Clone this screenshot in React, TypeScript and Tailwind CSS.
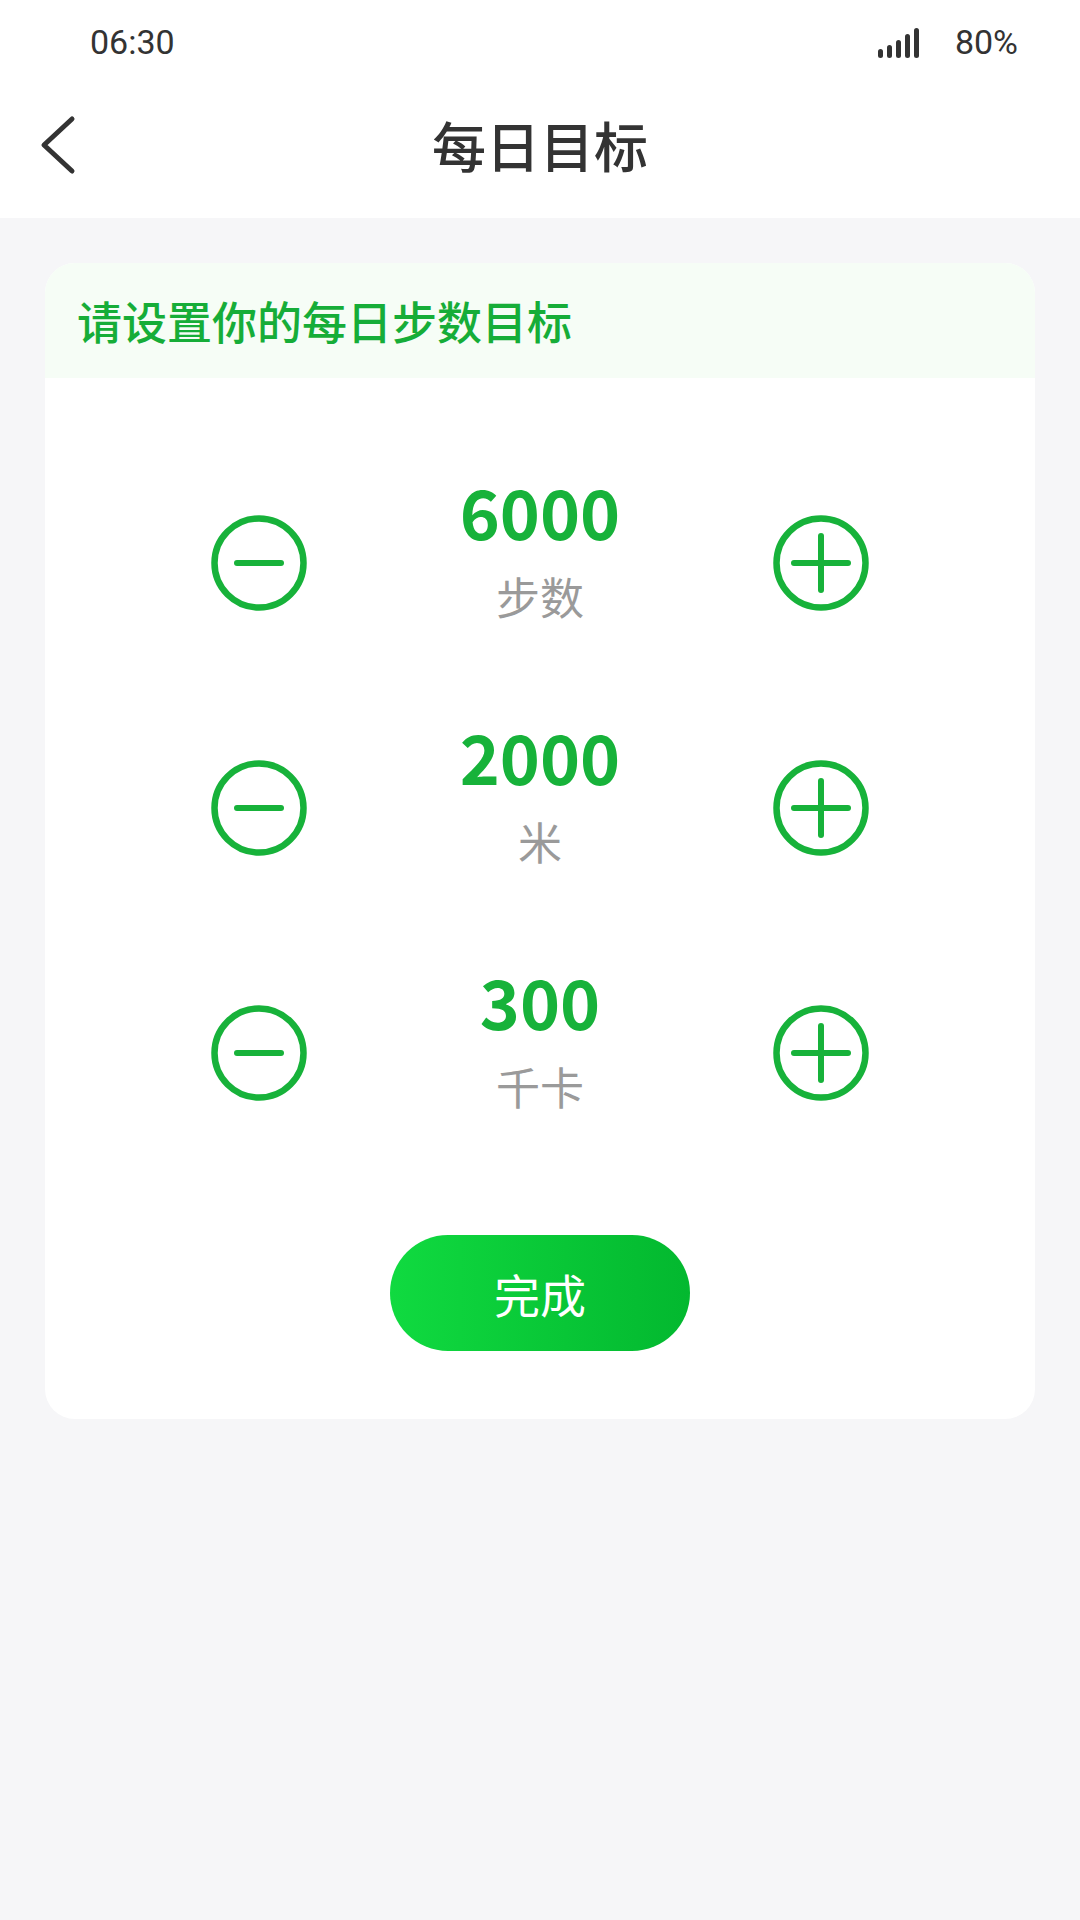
import React from 'react'

const GOALS = [
  { value: '6000', unit: '步数' },
  { value: '2000', unit: '米' },
  { value: '300', unit: '千卡' },
]

function SignalIcon() {
  return (
    <svg width="44" height="32" viewBox="0 0 44 32" fill="#333">
      <rect x="1" y="22" width="5" height="9" rx="2.5" />
      <rect x="10" y="18" width="5" height="13" rx="2.5" />
      <rect x="19" y="13" width="5" height="18" rx="2.5" />
      <rect x="28" y="7" width="5" height="24" rx="2.5" />
      <rect x="37" y="1" width="5" height="30" rx="2.5" />
    </svg>
  )
}

function RoundButton({ plus }: { plus?: boolean }) {
  return (
    <button className="flex h-[96px] w-[96px] items-center justify-center">
      <svg width="96" height="96" viewBox="0 0 96 96" fill="none" stroke="#17b23a" strokeLinecap="round">
        <circle cx="48" cy="48" r="44.5" strokeWidth="6.5" />
        {plus ? (
          <>
            <line x1="21" y1="48" x2="75" y2="48" strokeWidth="6" />
            <line x1="48" y1="21" x2="48" y2="75" strokeWidth="6" />
          </>
        ) : (
          <line x1="26" y1="48" x2="70" y2="48" strokeWidth="6" />
        )}
      </svg>
    </button>
  )
}

export default function App() {
  return (
    <div
      className="min-h-[1920px] w-[1080px] bg-[#f6f6f8]"
      style={{ fontFamily: '"Noto Sans CJK SC", "Noto Sans", sans-serif' }}
    >
      {/* Status + nav */}
      <header className="bg-white">
        <div className="flex h-[85px] items-center justify-between pl-[90px] pr-[62px] text-[34px] text-[#333]" style={{ fontFamily: 'Roboto, sans-serif' }}>
          <span>06:30</span>
          <div className="flex items-center gap-[34px]">
            <SignalIcon />
            <span>80%</span>
          </div>
        </div>
        <div className="relative flex h-[133px] items-center justify-center">
          <button className="absolute left-[34px] top-[30px]">
            <svg width="46" height="60" viewBox="0 0 46 60" fill="none" stroke="#333" strokeWidth="5" strokeLinecap="round" strokeLinejoin="round">
              <path d="M38 4 L10 30 L38 56" />
            </svg>
          </button>
          <h1 className="-mt-[14px] text-[54px] font-medium leading-none text-[#333]">每日目标</h1>
        </div>
      </header>

      <main className="px-[45px] pt-[45px]">
        <section className="overflow-hidden rounded-[30px] bg-white">
          <div className="flex h-[115px] items-center bg-[#f6fdf6] pl-[32px]">
            <h2 className="text-[45px] font-medium text-[#16ad38]">请设置你的每日步数目标</h2>
          </div>

          <div className="flex flex-col pt-[63px]">
            {GOALS.map((g) => (
              <div key={g.unit} className="mx-auto flex h-[245px] w-[658px] items-start justify-between">
                <div className="pt-[74px]">
                  <RoundButton />
                </div>
                <div className="flex flex-col items-center pt-[32px]">
                  <span className="text-[68px] font-bold leading-[76px] text-[#17b23a]">{g.value}</span>
                  <span className="mt-[22px] text-[44px] leading-[50px] text-[#9a9a9a]">{g.unit}</span>
                </div>
                <div className="pt-[74px]">
                  <RoundButton plus />
                </div>
              </div>
            ))}
          </div>

          <div className="flex justify-center pb-[68px] pt-[59px]">
            <button className="flex h-[116px] w-[300px] items-center justify-center rounded-full bg-gradient-to-r from-[#10da40] to-[#03b82f] text-[46px] font-normal text-white">
              完成
            </button>
          </div>
        </section>
      </main>
    </div>
  )
}
